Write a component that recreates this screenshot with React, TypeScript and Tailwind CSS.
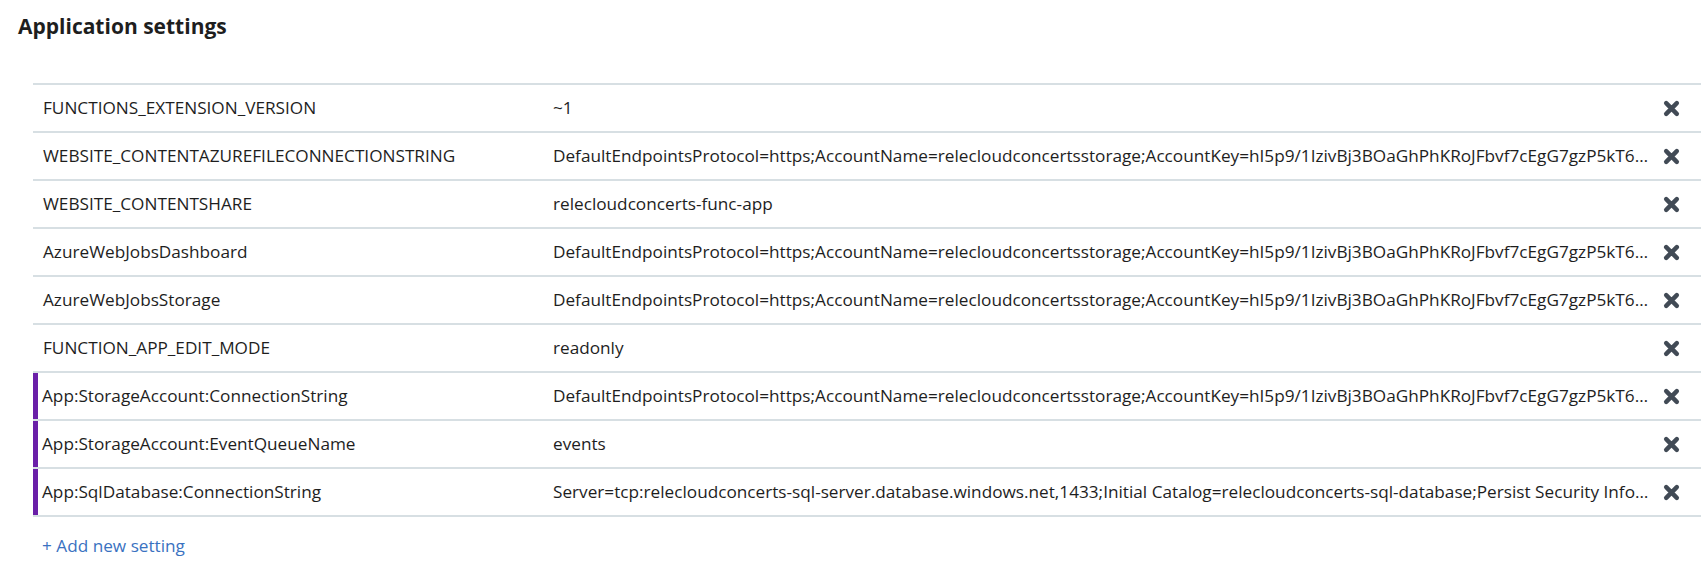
interface ISetting {
	name: string
	value: string
	slot?: boolean
}

const storageConn =
	'DefaultEndpointsProtocol=https;AccountName=relecloudconcertsstorage;AccountKey=hI5p9/1IzivBj3BOaGhPhKRoJFbvf7cEgG7gzP5kT6hWq8Rz0pLkYc2nQ3==;EndpointSuffix=core.windows.net'

const settings: Array<ISetting> = [
	{ name: 'FUNCTIONS_EXTENSION_VERSION', value: '~1' },
	{ name: 'WEBSITE_CONTENTAZUREFILECONNECTIONSTRING', value: storageConn },
	{ name: 'WEBSITE_CONTENTSHARE', value: 'relecloudconcerts-func-app' },
	{ name: 'AzureWebJobsDashboard', value: storageConn },
	{ name: 'AzureWebJobsStorage', value: storageConn },
	{ name: 'FUNCTION_APP_EDIT_MODE', value: 'readonly' },
	{ name: 'App:StorageAccount:ConnectionString', value: storageConn, slot: true },
	{ name: 'App:StorageAccount:EventQueueName', value: 'events', slot: true },
	{
		name: 'App:SqlDatabase:ConnectionString',
		value:
			'Server=tcp:relecloudconcerts-sql-server.database.windows.net,1433;Initial Catalog=relecloudconcerts-sql-database;Persist Security Info=False;User ID=relecloud;Password=********;',
		slot: true
	}
]

// bold "times" glyph used for the delete button
const CloseIcon = () => (
	<svg width="17" height="17" viewBox="0 0 16 16" aria-hidden="true">
		<path d="M3 3L13 13M13 3L3 13" stroke="currentColor" strokeWidth="4.2" strokeLinecap="round" fill="none" />
	</svg>
)

const SettingRow = ({ item }: { item: ISetting }) => {
	return (
		<div className="flex h-[48px] items-center border-t-2 border-[#d7dfe3] text-[17.2px] text-[#1e1e1e]">
			<div
				className={
					item.slot
						? 'flex h-full w-[519px] shrink-0 items-center border-l-[5px] border-[#6a1fa8] pl-[4px]'
						: 'flex h-full w-[519px] shrink-0 items-center pl-[10px]'
				}
			>
				{item.name}
			</div>
			<div className="min-w-0 flex-1 truncate pl-[1px]">{item.value}</div>
			<div className="flex w-[44px] shrink-0 items-center pl-[6px] text-[#414a55]">
				<CloseIcon />
			</div>
		</div>
	)
}

export default function App() {
	return (
		<div className="min-h-[581px] bg-white pt-[10px] font-['Open_Sans',sans-serif]">
			<h2 className="pl-[18px] text-[21px] leading-[32px] font-bold text-[#1e1e1e]">Application settings</h2>

			<div className="mt-[41px] ml-[33px] border-b-2 border-[#d7dfe3]">
				{settings.map((item) => (
					<SettingRow key={item.name} item={item} />
				))}
			</div>

			<div className="mt-[16px] pl-[42px] text-[17.2px] text-[#3a72c1]">+ Add new setting</div>
		</div>
	)
}
